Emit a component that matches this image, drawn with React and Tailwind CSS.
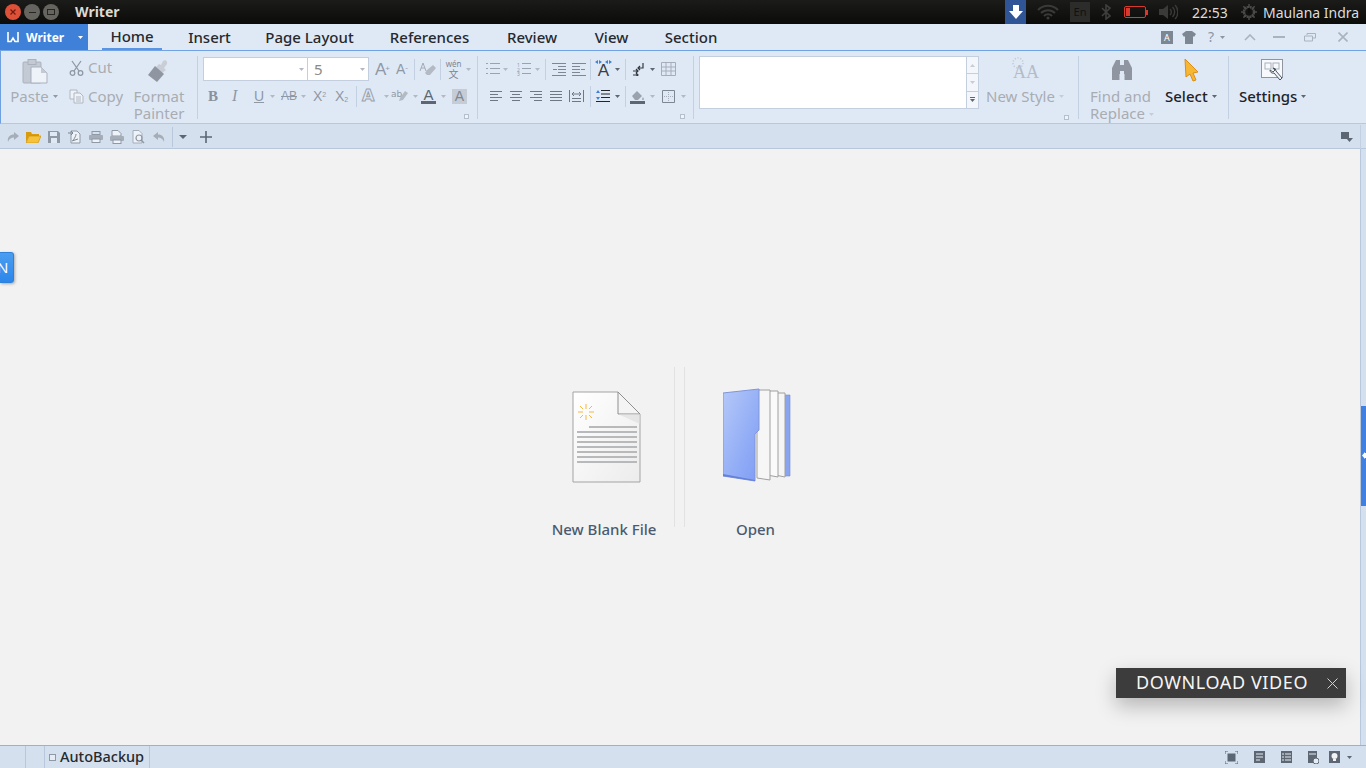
import React from "react";

const G = "#8f98a5"; // disabled icon grey
const D = "#5d6673"; // darker icon grey

const Caret = ({ className = "", color = "#b3b9c2" }) => (
  <svg width="5" height="3" viewBox="0 0 5 3" className={"shrink-0 " + className}>
    <polygon points="0,0 5,0 2.5,3" fill={color} />
  </svg>
);

const Sep = ({ className = "", h = "h-[21px]" }) => <div className={"w-px bg-[#c3d0e2] shrink-0 " + h + " " + className} />;

const Launcher = () => (
  <div className="w-[5px] h-[5px] border border-[#b5bfcc] bg-[#eef3fa]" />
);

const Lines = ({ w = 14, rows, color = D, className = "" }) => (
  <svg width={w} height="14" viewBox={`0 0 ${w} 14`} className={"shrink-0 " + className}>
    {rows.map((r, i) => (
      <rect key={i} x={r[0]} y={r[1]} width={r[2]} height="1" fill={color} />
    ))}
  </svg>
);

const TrayWifi = () => (
  <svg width="22" height="16" viewBox="0 0 22 16" className="ml-[11px]">
    <path d="M1 6a14 14 0 0 1 20 0M4 9a10 10 0 0 1 14 0M7 12a5.5 5.5 0 0 1 8 0" fill="none" stroke="#3a3a38" strokeWidth="2" />
    <circle cx="11" cy="14" r="1.6" fill="#3a3a38" />
  </svg>
);

function TitleBar() {
  return (
    <div className="h-6 shrink-0 flex items-center bg-gradient-to-b from-[#1b1b19] to-[#0b0b0a] text-[14px]">
      <div className="ml-[5px] w-4 h-4 rounded-full bg-[#de5138] flex items-center justify-center">
        <svg width="6" height="6" viewBox="0 0 6 6">
          <path d="M.5.5l5 5M5.500.5l-5 5" stroke="#6e1c10" strokeWidth="1.2" />
        </svg>
      </div>
      <div className="ml-[3px] w-4 h-4 rounded-full bg-[#66645e] flex items-center justify-center">
        <div className="w-[7px] h-px bg-[#26251f]" />
      </div>
      <div className="ml-[3px] w-4 h-4 rounded-full bg-[#66645e] flex items-center justify-center">
        <div className="w-[8px] h-[6px] border border-[#26251f]" />
      </div>
      <span className="ml-[16px] -mt-[2px] font-bold text-[#dcd9d2]">Writer</span>
      <div className="ml-auto flex items-center h-6">
        <div className="w-[21px] h-6 bg-[#2f5596] flex items-center justify-center">
          <svg width="16" height="16" viewBox="0 0 16 16">
            <path d="M5 1h6v6h4l-7 8-7-8h4z" fill="#fff" />
          </svg>
        </div>
        <TrayWifi />
        <div className="ml-[11px] w-[20px] h-[20px] bg-[#2c2c2b] text-[#11110f] text-[11px] flex items-center justify-center">En</div>
        <svg width="10" height="16" viewBox="0 0 10 16" className="ml-[11px]">
          <path d="M1 4l8 8-4 3V1l4 3-8 8" fill="none" stroke="#3f3f3d" strokeWidth="1.6" />
        </svg>
        <div className="ml-[13px] flex items-center">
          <div className="w-[22px] h-[12px] border border-[#d8392c] rounded-[2px] p-px">
            <div className="w-[4px] h-full bg-[#d8392c]" />
          </div>
          <div className="w-[2px] h-[5px] bg-[#d8392c]" />
        </div>
        <svg width="20" height="16" viewBox="0 0 20 16" className="ml-[10px]">
          <path d="M1 5h4l5-4v14l-5-4H1z" fill="#3a3a38" />
          <path d="M12 5a4 4 0 0 1 0 6M14.5 3a7 7 0 0 1 0 10M17 1a10 10 0 0 1 0 14" fill="none" stroke="#3a3a38" strokeWidth="1.4" />
        </svg>
        <span className="ml-[14px] text-[#dcdcdc] w-[36px] whitespace-nowrap">22:53</span>
        <svg width="16" height="16" viewBox="0 0 16 16" className="ml-[13px]">
          <circle cx="8" cy="8" r="5" fill="none" stroke="#4a4a47" strokeWidth="2.5" strokeDasharray="2.2 0.4" />
          <path d="M8 0v16M0 8h16M2.3 2.3l11.4 11.4M13.7 2.3L2.3 13.7" stroke="#4a4a47" strokeWidth="1.5" strokeDasharray="2.5 11" />
          <path d="M8 4v5" stroke="#0d0d0c" strokeWidth="2" />
        </svg>
        <span className="ml-[6px] mr-[5px] w-[98px] whitespace-nowrap text-[#dcdcdc]">Maulana Indra</span>
      </div>
    </div>
  );
}

const tabs = [
  ["Home", "w-[42px]"],
  ["Insert", "w-[41px]"],
  ["Page Layout", "w-[87px]"],
  ["References", "w-[81px]"],
  ["Review", "w-[52px]"],
  ["View", "w-[35px]"],
  ["Section", "w-[52px]"],
];

function TabBar() {
  return (
    <div className="h-[27px] shrink-0 flex bg-[#dfe9f6] border-b border-[#72a3e4]">
      <div className="w-[88px] h-[26px] bg-[#3f80d8] flex items-center text-white font-bold text-[12px]">
        <svg width="12" height="12" viewBox="0 0 12 12" className="ml-[7px]">
          <path d="M1 1v9.5h3L6 7l2 3.5h3V1" fill="none" stroke="#fff" strokeWidth="1.6" />
        </svg>
        <span className="ml-[7px] mt-[2px]">Writer</span>
        <Caret className="ml-[14px]" color="#fff" />
      </div>
      <div className="ml-[14px] flex gap-[18px]">
        {tabs.map(([t, w], i) => (
          <div key={t} className={"px-[9px] h-[26px] flex items-center justify-center " + (i === 0 ? "border-b-2 border-[#5a95e5]" : "")}>
            <span className={"text-[15px] font-medium text-[#26292e] whitespace-nowrap flex justify-center " + w}>{t}</span>
          </div>
        ))}
      </div>
      <div className="ml-auto flex items-center h-[26px] text-[#8c95a3]">
        <div className="w-[12px] h-[13px] bg-[#7d8794] text-white text-[9px] leading-[13px] text-center">A</div>
        <svg width="14" height="13" viewBox="0 0 14 13" className="ml-[9px]">
          <path d="M4 0h6l4 3-2 3-1-1v8H3V5L2 6 0 3z" fill="#7d8794" />
        </svg>
        <span className="ml-[12px] w-[7px] text-[14px] leading-none">?</span>
        <Caret className="ml-[5px]" color="#8c95a3" />
        <svg width="12" height="7" viewBox="0 0 12 7" className="ml-[19px]">
          <path d="M1 6l5-5 5 5" fill="none" stroke="#a9b2be" strokeWidth="1.6" />
        </svg>
        <div className="ml-[17px] w-[12px] h-[2px] bg-[#a9b2be]" />
        <svg width="12" height="9" viewBox="0 0 12 9" className="ml-[19px]">
          <path d="M3 2V.5h8.5V5H9M.5 3h8v5h-8z" fill="none" stroke="#a9b2be" />
        </svg>
        <svg width="10" height="10" viewBox="0 0 10 10" className="ml-[22px] mr-[18px]">
          <path d="M0.5 0.5l9 9M9.5 0.5l-9 9" stroke="#a9b2be" strokeWidth="1.6" />
        </svg>
      </div>
    </div>
  );
}

function ClipboardGroup() {
  return (
    <div className="w-[196px] h-[67px] flex text-[15px] text-[#a9acb1] leading-[17px]">
      <div className="ml-[9px] w-[50px] flex flex-col items-center">
        <svg width="26" height="25" viewBox="0 0 26 25" className="mt-[3px] shrink-0">
          <rect x="1" y="3" width="18" height="21" rx="1" fill="#c3cad4" stroke="#a9b1bc" />
          <rect x="6" y="0.5" width="8" height="5" fill="#c3cad4" stroke="#a9b1bc" />
          <path d="M9 8h10l6 6v10H9z" fill="#eef3fa" stroke="#a9b1bc" />
          <path d="M19 8v6h6z" fill="#c3cad4" />
        </svg>
        <div className="mt-[4px] -ml-[2px] flex items-center whitespace-nowrap">
          Paste
          <Caret className="ml-[4px]" color="#8f98a5" />
        </div>
      </div>
      <div className="ml-[9px] w-[55px] flex flex-col">
        <div className="flex items-center h-[17px] mt-[3px]">
          <svg width="15" height="16" viewBox="0 0 15 16" className="shrink-0">
            <path d="M3 1l7 10M12 1L5 11" stroke={G} strokeWidth="1.3" />
            <circle cx="3.5" cy="13" r="2.3" fill="none" stroke={G} strokeWidth="1.3" />
            <circle cx="11.5" cy="13" r="2.3" fill="none" stroke={G} strokeWidth="1.3" />
          </svg>
          <span className="ml-[4px]">Cut</span>
        </div>
        <div className="flex items-center h-[17px] mt-[12px]">
          <svg width="15" height="15" viewBox="0 0 15 15" className="shrink-0">
            <path d="M1 1h7v9H1z" fill="#eef3fa" stroke="#b0b6bf" />
            <path d="M5 4h6l3 3v7H5zM7 8h5M7 10h5M7 12h5" fill="#eef3fa" stroke="#b0b6bf" />
          </svg>
          <span className="ml-[4px]">Copy</span>
        </div>
      </div>
      <div className="ml-[9px] w-[52px] flex flex-col items-center">
        <svg width="24" height="24" viewBox="0 0 24 24" className="mt-[3px] shrink-0">
          <path d="M16 2c2-2 5 0 4 3l-3 4 2 2-4 3-6-6 3-3 2 1z" fill="#c9ced6" />
          <path d="M8 7l9 8-7 8-9-7z" fill="#8f96a1" />
        </svg>
        <div className="mt-[5px] text-center">Format Painter</div>
      </div>
    </div>
  );
}

function FontGroup() {
  return (
    <div className="w-[279px] h-[66px] flex flex-col text-[#8f98a5]">
      <div className="h-[24px] flex items-center">
        <div className="ml-[5px] w-[166px] h-[24px] flex bg-white border border-[#c3cfdf] text-[15px] text-[#8a8a8a]">
          <div className="w-[104px] flex items-center justify-end border-r border-[#c3cfdf] pr-[3px]">
            <Caret />
          </div>
          <div className="flex-1 flex items-center pl-[6px]">
            5
            <Caret className="ml-auto mr-[3px]" />
          </div>
        </div>
        <span className="ml-[6px] w-[14px] text-[17px] font-['Liberation_Sans'] leading-none whitespace-nowrap">A<sup className="text-[8px] -ml-[1px]">+</sup></span>
        <span className="ml-[7px] w-[13px] text-[14px] font-['Liberation_Sans'] leading-none whitespace-nowrap">A<sup className="text-[8px]">-</sup></span>
        <Sep className="ml-[5px]" />
        <svg width="17" height="15" viewBox="0 0 17 15" className="ml-[4px]">
          <path d="M8 8l6-5 3 3-6 7H8l-2-2z" fill="#b4bac3" />
          <path d="M1 9l3-8 3 8M2 6h4" fill="none" stroke="#a3aab4" />
        </svg>
        <Sep className="ml-[4px]" />
        <svg width="17" height="20" viewBox="0 0 17 20" className="ml-[4px] overflow-visible">
          <text x="8.500" y="8" fontSize="8" textAnchor="middle" fill="#7c8590">wén</text>
          <text x="8.500" y="19" fontSize="10" textAnchor="middle" fill="#7c8590" fontFamily="'Noto Sans CJK SC', sans-serif">文</text>
        </svg>
        <Caret className="ml-[4px]" />
      </div>
      <div className="mt-[4px] h-[22px] flex items-center font-['DejaVu_Sans'] whitespace-nowrap">
        <span className="ml-[10px] w-[11px] text-[15px] font-bold font-['Liberation_Serif'] text-[#8a919b]">B</span>
        <span className="ml-[13px] w-[10px] text-[16px] italic font-['Liberation_Serif']">I</span>
        <span className="ml-[11px] w-[12px] text-[14px] underline font-['Liberation_Sans'] text-center">U</span>
        <Caret className="ml-[5px]" />
        <span className="ml-[6px] w-[16px] text-[12px] line-through font-['Liberation_Sans']">AB</span>
        <Caret className="ml-[4px]" />
        <span className="ml-[7px] w-[14px] text-[14px] font-['Liberation_Sans']">X<sup className="text-[7px]">2</sup></span>
        <span className="ml-[8px] w-[15px] text-[14px] font-['Liberation_Sans']">X<sub className="text-[7px]">2</sub></span>
        <Sep className="ml-[6px]" />
        <span className="ml-[5px] w-[14px] text-[16px] font-bold leading-none text-transparent [-webkit-text-stroke:1px_#9aa2ad]">A</span>
        <Caret className="ml-[8px]" />
        <svg width="17" height="14" viewBox="0 0 17 14" className="ml-[2px]">
          <path d="M9 9l5-7 3 2-5 7-4 1z" fill="#b4bac3" />
          <text x="0" y="8" fontSize="9" fill="#8f98a5">ab</text>
        </svg>
        <Caret className="ml-[5px]" />
        <div className="ml-[3px] w-[15px] flex flex-col items-center">
          <span className="text-[15px] leading-[13px] font-['Liberation_Sans'] text-[#5d6673]">A</span>
          <div className="w-[15px] h-[3px] bg-[#5d6673]" />
        </div>
        <Caret className="ml-[5px]" />
        <div className="ml-[6px] w-[15px] h-[15px] bg-[#c5ccd6] text-[14px] leading-[15px] text-center font-['Liberation_Sans'] text-[#7d8692]">A</div>
      </div>
      <div className="mt-[7px] h-[5px] flex justify-end pr-[8px]">
        <Launcher />
      </div>
    </div>
  );
}

const bullet = [[0, 1, 2], [4, 1, 10], [0, 6, 2], [4, 6, 10], [0, 11, 2], [4, 11, 10]];
const indentA = [[0, 1, 14], [6, 4, 8], [6, 7, 8], [6, 10, 8], [0, 13, 14], [1, 7, 4]];
const alignL = [[0, 2, 12], [0, 5, 8], [0, 8, 12], [0, 11, 8]];
const alignC = [[0, 2, 12], [2, 5, 8], [0, 8, 12], [2, 11, 8]];
const alignR = [[0, 2, 12], [4, 5, 8], [0, 8, 12], [4, 11, 8]];
const alignJ = [[0, 2, 12], [0, 5, 12], [0, 8, 12], [0, 11, 12]];

function ParagraphGroup() {
  return (
    <div className="w-[215px] h-[66px] flex flex-col">
      <div className="h-[24px] flex items-center">
        <Lines className="ml-[8px]" rows={bullet} color="#9aa2ad" />
        <Caret className="ml-[3px]" />
        <svg width="14" height="14" viewBox="0 0 14 14" className="ml-[9px]">
          <rect x="5" y="1" width="9" height="1" fill="#9aa2ad" />
          <rect x="5" y="6" width="9" height="1" fill="#9aa2ad" />
          <rect x="5" y="11" width="9" height="1" fill="#9aa2ad" />
          <text x="0" y="4.500" fontSize="5" fill="#8f98a5">1</text>
          <text x="0" y="9.500" fontSize="5" fill="#8f98a5">2</text>
          <text x="0" y="14" fontSize="5" fill="#8f98a5">3</text>
        </svg>
        <Caret className="ml-[4px]" />
        <Sep className="ml-[5px]" />
        <Lines className="ml-[6px]" rows={indentA} color="#7d8692" />
        <Lines className="ml-[6px]" rows={[[0, 1, 14], [0, 4, 8], [0, 7, 8], [0, 10, 8], [0, 13, 14], [9, 7, 4]]} color="#7d8692" />
        <Sep className="ml-[4px]" />
        <div className="ml-[4px] w-[17px] flex flex-col items-center">
          <svg width="17" height="4" viewBox="0 0 17 4">
            <path d="M0 2l3-2v4zM7 2L4 0v4zM10 2l3-2v4zM17 2l-3-2v4z" fill="#3f80d8" />
          </svg>
          <span className="text-[17px] leading-[14px] font-['Liberation_Sans'] text-[#3a3f47]">A</span>
        </div>
        <Caret className="ml-[3px]" color="#5d6673" />
        <Sep className="ml-[5px]" />
        <svg width="12" height="14" viewBox="0 0 12 14" className="ml-[6px]">
          <path d="M11 1v5H6M8 4L6 6l2 2M1 9h5M4 7l2 2-2 2M1 13h5M4 11l2 2-2 2" fill="none" stroke="#33383f" strokeWidth="1.2" />
        </svg>
        <Caret className="ml-[6px]" color="#5d6673" />
        <svg width="15" height="14" viewBox="0 0 15 14" className="ml-[6px]">
          <path d="M.5.5h14v13H.5zM.5 5h14M.5 9h14M5 .5v13M10 .5v13" fill="none" stroke="#a5adb8" />
        </svg>
      </div>
      <div className="mt-[4px] h-[22px] flex items-center">
        <Lines w={12} className="ml-[12px]" rows={alignL} color="#6e7784" />
        <Lines w={12} className="ml-[8px]" rows={alignC} color="#6e7784" />
        <Lines w={12} className="ml-[8px]" rows={alignR} color="#6e7784" />
        <Lines w={12} className="ml-[8px]" rows={alignJ} color="#6e7784" />
        <svg width="15" height="14" viewBox="0 0 15 14" className="ml-[7px]">
          <path d="M.5 1v12M14.5 1v12M3 5h9M3 5l2-2M3 5l2 2M12 5l-2-2M12 5l-2 2M3 9.5h9M3 12.5h9" fill="none" stroke="#6e7784" />
        </svg>
        <Sep className="ml-[6px]" />
        <svg width="14" height="14" viewBox="0 0 14 14" className="ml-[5px]">
          <path d="M5 1.5h9M5 5h9M5 8.5h9M0 12.5h14" stroke="#22262b" strokeWidth="1.2" />
          <path d="M2 1L0 4h4zM2 11L0 8h4z" fill="#3f80d8" />
        </svg>
        <Caret className="ml-[5px]" color="#5d6673" />
        <Sep className="ml-[5px]" />
        <svg width="15" height="15" viewBox="0 0 15 15" className="ml-[4px]">
          <path d="M2 7l5-5 5 5-4 4H5z" fill="#9aa2ad" />
          <path d="M13 8c1 2 1.5 3 0 3s-1-1 0-3" fill="#9aa2ad" />
          <rect y="12" width="15" height="3" fill="#5d6673" />
        </svg>
        <Caret className="ml-[5px]" />
        <svg width="13" height="13" viewBox="0 0 13 13" className="ml-[7px]">
          <path d="M.5.5h12v12H.5z" fill="none" stroke="#7d8692" />
          <path d="M6.5 2v9M2 6.5h9" stroke="#a5adb8" strokeDasharray="1 1" />
        </svg>
        <Caret className="ml-[6px]" />
      </div>
      <div className="mt-[7px] h-[5px] flex justify-end pr-[8px]">
        <Launcher />
      </div>
    </div>
  );
}

function StylesGroup() {
  return (
    <div className="flex text-[15px] leading-[17px]">
      <div className="ml-[5px] w-[280px] h-[53px] flex bg-white border border-[#c3cfdf]">
        <div className="flex-1" />
        <div className="w-[12px] flex flex-col border-l border-[#c3cfdf] bg-[#f3f6fa]">
          <div className="flex-1 flex items-center justify-center border-b border-[#c3cfdf]">
            <svg width="5" height="3" viewBox="0 0 5 3"><polygon points="2.5,0 5,3 0,3" fill="#c8cdd4" /></svg>
          </div>
          <div className="flex-1 flex items-center justify-center border-b border-[#c3cfdf]">
            <Caret color="#c8cdd4" />
          </div>
          <div className="flex-1 flex flex-col items-center justify-center gap-px">
            <div className="w-[5px] h-px bg-[#5d6673]" />
            <Caret color="#5d6673" />
          </div>
        </div>
      </div>
      <div className="ml-[8px] w-[91px] h-[66px] flex flex-col text-[#a9acb1]">
        <div className="relative h-[26px] mt-[1px] pl-[26px] flex items-end text-[18px] leading-[22px] font-['Liberation_Serif'] text-[#b4bcc7]">
          AA
          <svg width="12" height="12" viewBox="0 0 12 12" className="absolute left-[25px] top-0">
            <circle cx="6" cy="6" r="5" fill="none" stroke="#c3cad4" strokeWidth="1.5" strokeDasharray="1.2 1.6" />
          </svg>
        </div>
        <div className="mt-[5px] -ml-px flex items-center whitespace-nowrap">
          New Style
          <Caret className="ml-[4px]" color="#c8cdd4" />
        </div>
        <div className="mt-[10px] h-[5px] flex justify-end pr-[9px]">
          <Launcher />
        </div>
      </div>
    </div>
  );
}

function ToolsGroup() {
  return (
    <div className="flex text-[15px] leading-[17px] whitespace-nowrap">
      <div className="ml-[11px] w-[64px] flex flex-col items-start text-[#a9acb1]">
        <svg width="22" height="22" viewBox="0 0 22 22" className="mt-[3px] ml-[21px] shrink-0">
          <path d="M5 1h4v20H1V9zM13 1h4l4 8v12h-8z" fill="#8f96a1" />
          <rect x="8" y="6" width="6" height="6" fill="#8f96a1" />
          <rect x="8.5" y="15" width="5" height="6" fill="#dfe9f6" />
        </svg>
        <div className="mt-[7px]">
          Find and
          <br />
          Replace
          <Caret className="ml-[4px] inline-block align-middle" color="#c8cdd4" />
        </div>
      </div>
      <div className="ml-[11px] w-[63px] flex flex-col items-start font-medium text-[#1f2329]">
        <svg width="15" height="24" viewBox="0 0 15 24" className="mt-[2px] ml-[19px] shrink-0">
          <path d="M1 1l13 13-5 1 3 7-3 1-3-7-4 3z" fill="#f7b733" stroke="#d98f1a" />
        </svg>
        <div className="mt-[6px] flex items-center">
          Select
          <Caret className="ml-[4px]" color="#5d6673" />
        </div>
      </div>
      <Sep h="h-[63px]" className="bg-[#c3d0e2]" />
      <div className="ml-[10px] flex flex-col items-start font-medium text-[#1f2329]">
        <svg width="23" height="23" viewBox="0 0 23 23" className="mt-[3px] ml-[22px] shrink-0">
          <rect x=".5" y=".5" width="21" height="18" fill="#f7f9fc" stroke="#8f96a1" />
          <rect x="4" y="4" width="6" height="6" fill="none" stroke="#a9b0ba" />
          <rect x="12" y="4" width="6" height="6" fill="none" stroke="#a9b0ba" />
          <path d="M9 11a3 3 0 0 0 4 3l6 7 2-2-6-7a3 3 0 0 0-3-3l2 2-2 2z" fill="#eef3fa" stroke="#4d555f" />
        </svg>
        <div className="mt-[6px] flex items-center">
          Settings
          <Caret className="ml-[4px]" color="#5d6673" />
        </div>
      </div>
    </div>
  );
}

function Ribbon() {
  return (
    <div className="h-[73px] shrink-0 flex bg-[#dfe9f6] border-b border-[#b8c7dc] border-l border-l-[#6ea0e0] pt-[5px]">
      <ClipboardGroup />
      <Sep h="h-[63px]" />
      <div className="flex flex-col pt-px">
        <FontGroup />
      </div>
      <Sep h="h-[63px]" />
      <div className="flex flex-col pt-px">
        <ParagraphGroup />
      </div>
      <Sep h="h-[63px]" />
      <StylesGroup />
      <Sep h="h-[63px]" />
      <ToolsGroup />
    </div>
  );
}

function QuickBar() {
  return (
    <div className="h-[25px] shrink-0 flex items-center bg-[#d5e0ee] border-b border-[#b8c7dc] pt-px">
      <svg width="12" height="10" viewBox="0 0 12 10" className="ml-[7px]">
        <path d="M7 0l5 4-5 4V5.5C4 5.5 2 7 1 10 0 5 3 2.5 7 2.5z" fill="#a5adb8" />
      </svg>
      <svg width="15" height="12" viewBox="0 0 15 12" className="ml-[7px]">
        <path d="M0 1h5l1 2h7v2H3L0 11z" fill="#d99a0d" />
        <path d="M3 5h12l-3 7H0z" fill="#f6c239" stroke="#c58a0a" strokeWidth=".6" />
      </svg>
      <svg width="12" height="12" viewBox="0 0 12 12" className="ml-[7px]">
        <path d="M0 0h10l2 2v10H0z" fill="#8f98a5" />
        <rect x="2" y="1" width="7" height="4" fill="#dfe9f6" />
        <rect x="3" y="7" width="6" height="5" fill="#dfe9f6" />
      </svg>
      <svg width="13" height="14" viewBox="0 0 13 14" className="ml-[8px]">
        <path d="M3 4V1h6l3 3v9H3z" fill="#eef3fa" stroke="#8f98a5" />
        <path d="M0 3h5M3 1l2 2-2 2M5 11c2-4 3-5 3-7M4 11l6-2" fill="none" stroke="#7d8692" />
      </svg>
      <svg width="14" height="12" viewBox="0 0 14 12" className="ml-[8px]">
        <rect x="3" y=".5" width="8" height="3" fill="none" stroke="#8f98a5" />
        <rect y="4" width="14" height="5" rx="1" fill="#a5adb8" />
        <rect x="3" y="8" width="8" height="3.5" fill="#eef3fa" stroke="#8f98a5" />
      </svg>
      <svg width="14" height="14" viewBox="0 0 14 14" className="ml-[7px]">
        <path d="M2 .5h6l3 3V6H2z" fill="#eef3fa" stroke="#8f98a5" />
        <rect y="6" width="14" height="5" rx="1" fill="#a5adb8" />
        <rect x="3" y="10" width="8" height="3.5" fill="#eef3fa" stroke="#8f98a5" />
      </svg>
      <svg width="13" height="14" viewBox="0 0 13 14" className="ml-[8px]">
        <path d="M1 .5h6l3 3V13H1z" fill="#eef3fa" stroke="#a5adb8" />
        <circle cx="7" cy="8" r="3" fill="none" stroke="#8f98a5" strokeWidth="1.2" />
        <path d="M9 10l3 3" stroke="#8f98a5" strokeWidth="1.4" />
      </svg>
      <svg width="12" height="10" viewBox="0 0 12 10" className="ml-[8px]">
        <path d="M5 0L0 4l5 4V5.5c3 0 5 1.5 6 4.500 1-5-2-7.500-6-7.500z" fill="#a5adb8" />
      </svg>
      <div className="ml-[7px] w-px h-[20px] bg-[#b8c7dc]" />
      <svg width="8" height="4" viewBox="0 0 8 4" className="ml-[6px]">
        <polygon points="0,0 8,0 4,4" fill="#5d6673" />
      </svg>
      <svg width="12" height="12" viewBox="0 0 12 12" className="ml-[13px]">
        <path d="M6 0v12M0 6h12" stroke="#5d6673" strokeWidth="1.6" />
      </svg>
      <div className="ml-auto flex items-center">
        <div className="flex flex-col items-end mr-[7px]">
          <svg width="12" height="10" viewBox="0 0 12 10">
            <rect width="8" height="7" fill="#5d6673" />
            <polygon points="5,6 12,6 8.500,10" fill="#5d6673" />
          </svg>
        </div>
        <div className="w-px h-[24px] bg-[#c3d0e2]" />
        <div className="w-[5px]" />
      </div>
    </div>
  );
}

function DocIcon() {
  return (
    <svg width="70" height="94" viewBox="0 0 70 94">
      <defs>
        <linearGradient id="page" x1="0" y1="0" x2="1" y2="1">
          <stop offset="0" stopColor="#fff" />
          <stop offset="1" stopColor="#ececec" />
        </linearGradient>
      </defs>
      <path d="M1 1h45l22 22v68H1z" fill="url(#page)" stroke="#a3a3a3" strokeWidth="1" />
      <path d="M46 1v22h22z" fill="#f4f4f4" stroke="#8f8f8f" strokeWidth="1" />
      <path d="M46 23h22v10z" fill="#dcdcdc" opacity=".6" />
      <path d="M14 13v5M14 24v5M6 21h5M17 21h5M8 15l3 3M17 24l3 3M20 15l-3 3M8 27l3-3" stroke="#f6b83d" strokeWidth="1" />
      {[35, 40, 45, 50, 55, 60, 65, 70].map((y, i) => (
        <rect key={y} x={i === 0 ? 17 : 5} y={y} width={i === 0 ? 48 : 60} height="2" fill="#b8b9bb" />
      ))}
    </svg>
  );
}

function FolderIcon() {
  return (
    <svg width="68" height="96" viewBox="0 0 68 96">
      <defs>
        <linearGradient id="fold" x1="0" y1="0" x2="1" y2="1">
          <stop offset="0" stopColor="#b4c8f8" />
          <stop offset="1" stopColor="#7d9cf5" />
        </linearGradient>
      </defs>
      <path d="M61 7h6v81h-6z" fill="#8aa5f0" stroke="#6f8ad8" strokeWidth=".6" />
      <path d="M52 5h10v84l-10-2z" fill="#f5f5f5" stroke="#a0a0a0" />
      <path d="M44 3h11v86l-11-2z" fill="#fafafa" stroke="#a0a0a0" />
      <path d="M34 2h13v90l-13-2z" fill="#f6f6f6" stroke="#a0a0a0" />
      <path d="M0 5l36-4v41l-4 4v47l-32-5z" fill="url(#fold)" stroke="#7f95d8" strokeWidth="1" />
      <path d="M0 86l32 6v1l-32-5z" fill="#6480d8" />
    </svg>
  );
}

function Workspace() {
  return (
    <div className="flex-1 min-h-0 flex bg-[#f2f2f2]">
      <div className="flex-1 flex items-center justify-center text-[15px] font-medium text-[#4a5a70] whitespace-nowrap">
        <div className="w-[140px] h-[160px] mr-[9px] border-r border-[#e2e2e2] flex flex-col items-center pt-[24px]">
          <div className="h-[94px] ml-[4px]">
            <DocIcon />
          </div>
          <span className="mt-[33px] -ml-px">New Blank File</span>
        </div>
        <div className="w-[140px] h-[160px] mr-px border-l border-[#e2e2e2] flex flex-col items-center pt-[21px]">
          <div className="h-[96px] ml-[5px]">
            <FolderIcon />
          </div>
          <span className="mt-[34px] ml-[2px]">Open</span>
        </div>
      </div>
      <div className="w-[6px] shrink-0 bg-[#d5e0ee] border-l border-[#b8c7dc] flex items-center">
        <div className="w-[5px] h-[100px] bg-[#3f80e0] mt-[17px] flex items-center justify-end">
          <svg width="4" height="7" viewBox="0 0 4 7">
            <path d="M3 0v7L0 3.500z" fill="#fff" />
            <rect x="2" y="1" width="2" height="5" fill="#fff" />
          </svg>
        </div>
      </div>
    </div>
  );
}

function StatusBar() {
  return (
    <div className="h-[23px] shrink-0 flex items-center bg-[#d5e0ee] border-t border-[#9fb0c8]">
      <div className="ml-[25px] w-px h-full bg-[#b8c7dc]" />
      <div className="ml-[18px] w-px h-full bg-[#b8c7dc]" />
      <div className="ml-[4px] w-[7px] h-[7px] border border-[#8f98a5] bg-[#e6ecf5]" />
      <span className="ml-[4px] w-[85px] text-[14.5px] font-medium text-[#26292e] whitespace-nowrap">AutoBackup</span>
      <div className="ml-[4px] w-px h-full bg-[#b8c7dc]" />
      <div className="ml-auto flex items-center text-[#5d6673]">
        <svg width="13" height="13" viewBox="0 0 13 13">
          <path d="M0 3V0h3M10 0h3v3M13 10v3h-3M3 13H0v-3" fill="none" stroke="#5d6673" />
          <rect x="2.500" y="2.500" width="8" height="8" fill="#5d6673" />
        </svg>
        <svg width="11" height="12" viewBox="0 0 11 12" className="ml-[16px]">
          <rect width="11" height="12" fill="#5d6673" />
          <path d="M2 3h7M2 6h7M2 9h4" stroke="#e6ecf5" />
        </svg>
        <svg width="11" height="12" viewBox="0 0 11 12" className="ml-[16px]">
          <rect width="11" height="12" fill="#5d6673" />
          <path d="M1 3h2M4 3h6M1 6h2M4 6h6M1 9h2M4 9h6" stroke="#e6ecf5" />
        </svg>
        <svg width="11" height="13" viewBox="0 0 11 13" className="ml-[16px]">
          <rect width="9" height="12" fill="#5d6673" />
          <path d="M1 3h7" stroke="#e6ecf5" />
          <circle cx="8" cy="10" r="3" fill="#e6ecf5" stroke="#5d6673" />
        </svg>
        <svg width="11" height="12" viewBox="0 0 11 12" className="ml-[10px]">
          <rect width="11" height="12" fill="#5d6673" />
          <circle cx="5.500" cy="5" r="3" fill="#f2f2f2" />
          <rect x="4" y="8" width="3" height="2" fill="#f2f2f2" />
        </svg>
        <Caret className="ml-[7px] mr-[14px]" color="#5d6673" />
      </div>
    </div>
  );
}

export default function App() {
  return (
    <div className="relative w-[1366px] h-[768px] overflow-hidden flex flex-col bg-[#f2f2f2] font-['Noto_Sans',sans-serif]">
      <TitleBar />
      <TabBar />
      <Ribbon />
      <QuickBar />
      <Workspace />
      <StatusBar />

      {/* floating bits over the workspace */}
      <div className="absolute left-0 top-[252px] w-[14px] h-[31px] overflow-hidden rounded-r-[3px] border border-l-0 border-[#2f80d8] bg-gradient-to-b from-[#4a9df0] to-[#2c86ea] shadow-[1px_1px_3px_rgba(0,0,0,0.3)] flex items-center">
        <span className="text-white text-[15px] leading-none -ml-[3px]">N</span>
      </div>
      <div className="absolute left-[1116px] top-[668px] w-[230px] h-[30px] bg-[#3c3c3c] shadow-[0_8px_20px_rgba(0,0,0,0.25)] flex items-center text-[#f5f5f5]">
        <span className="ml-[20px] -mt-[2px] text-[18px] tracking-[0.6px] whitespace-nowrap">DOWNLOAD VIDEO</span>
        <svg width="11" height="11" viewBox="0 0 11 11" className="ml-auto mr-[8px]">
          <path d="M.5.5l10 10M10.500.5l-10 10" stroke="#d0d0d0" />
        </svg>
      </div>
    </div>
  );
}
